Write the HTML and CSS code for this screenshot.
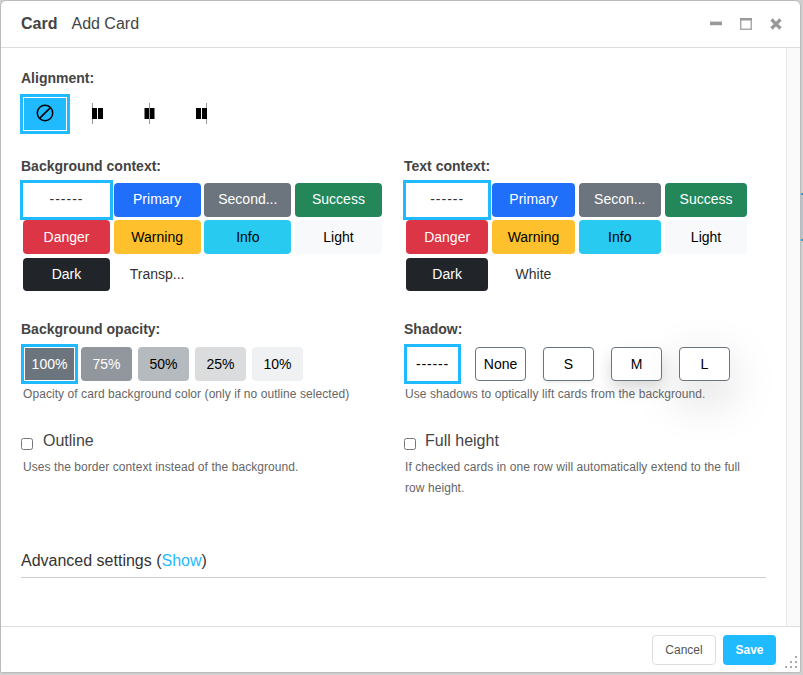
FILE: index.html
```html
<!DOCTYPE html>
<html lang="en">
  <head>
    <meta charset="UTF-8" />
    <meta name="viewport" content="width=device-width, initial-scale=1.0" />
    <title>Card - Add Card</title>
    <link rel="stylesheet" href="styles.css">
  </head>
  <body>
    <div class="page-strip"></div>
    <div class="window">
      <header class="win-head">
        <div class="win-title"><b>Card</b><span>Add Card</span></div>
        <div class="win-controls">
          <svg width="12" height="12" viewBox="0 0 12 12"><rect x="0" y="3.6" width="12" height="3.6" fill="#999"/></svg>
          <svg width="12" height="12" viewBox="0 0 12 12"><rect x="0.75" y="0.75" width="10.5" height="10.5" fill="none" stroke="#aaa" stroke-width="1.5"/><rect x="0" y="0" width="12" height="2.5" fill="#999"/></svg>
          <svg width="12" height="12" viewBox="0 0 12 12"><path d="M1.5 1.5 L10.5 10.5 M10.5 1.5 L1.5 10.5" stroke="#999" stroke-width="3.2"/></svg>
        </div>
      </header>

      <main class="win-body">
        <div class="content">
          <label class="field-label">Alignment:</label>
          <div class="align-row">
            <button class="align-btn selected">
              <svg width="18" height="18" viewBox="0 0 18 18"><circle cx="9" cy="9" r="7.7" fill="none" stroke="#000" stroke-width="1.5"/><path d="M3.6 14.4 L14.4 3.6" stroke="#000" stroke-width="1.5"/></svg>
            </button>
            <button class="align-btn">
              <svg width="11" height="21" viewBox="0 0 11 21"><rect x="0" y="0" width="1" height="21" fill="#999"/><rect x="0" y="5" width="5" height="11"/><rect x="6" y="5" width="5" height="11"/></svg>
            </button>
            <button class="align-btn">
              <svg width="11" height="21" viewBox="0 0 11 21"><rect x="5" y="0" width="1" height="21" fill="#999"/><rect x="0.5" y="5" width="4.5" height="11"/><rect x="6" y="5" width="4.5" height="11"/></svg>
            </button>
            <button class="align-btn">
              <svg width="11" height="21" viewBox="0 0 11 21"><rect x="10" y="0" width="1" height="21" fill="#999"/><rect x="0" y="5" width="5" height="11"/><rect x="6" y="5" width="5" height="11"/></svg>
            </button>
          </div>

          <div class="two-cols row-context">
            <div>
              <label class="field-label">Background context:</label>
              <div class="swatches swatches-bg">
                <button class="swatch selected">------</button>
                <button class="swatch primary">Primary</button>
                <button class="swatch secondary">Second...</button>
                <button class="swatch success">Success</button>
                <button class="swatch danger">Danger</button>
                <button class="swatch warning">Warning</button>
                <button class="swatch info">Info</button>
                <button class="swatch light">Light</button>
                <button class="swatch dark">Dark</button>
                <button class="swatch plain">Transp...</button>
              </div>
            </div>
            <div>
              <label class="field-label">Text context:</label>
              <div class="swatches swatches-text">
                <button class="swatch selected">------</button>
                <button class="swatch primary">Primary</button>
                <button class="swatch secondary">Secon...</button>
                <button class="swatch success">Success</button>
                <button class="swatch danger">Danger</button>
                <button class="swatch warning">Warning</button>
                <button class="swatch info">Info</button>
                <button class="swatch light">Light</button>
                <button class="swatch dark">Dark</button>
                <button class="swatch plain">White</button>
              </div>
            </div>
          </div>

          <div class="two-cols row-opacity">
            <div>
              <label class="field-label">Background opacity:</label>
              <div class="small-row opacity-row">
                <button class="small-btn op-100 selected">100%</button>
                <button class="small-btn op-75">75%</button>
                <button class="small-btn op-50">50%</button>
                <button class="small-btn op-25">25%</button>
                <button class="small-btn op-10">10%</button>
              </div>
              <p class="help">Opacity of card background color (only if no outline selected)</p>
            </div>
            <div>
              <label class="field-label">Shadow:</label>
              <div class="small-row shadow-row">
                <button class="small-btn dashes selected">------</button>
                <button class="small-btn sh sh-none">None</button>
                <button class="small-btn sh sh-s">S</button>
                <button class="small-btn sh sh-m">M</button>
                <button class="small-btn sh sh-l">L</button>
              </div>
              <p class="help help-right">Use shadows to optically lift cards from the background.</p>
            </div>
          </div>

          <div class="two-cols row-checks">
            <div>
              <label class="check"><input type="checkbox" /><span class="check-outline">Outline</span></label>
              <p class="help check-help">Uses the border context instead of the background.</p>
            </div>
            <div>
              <label class="check"><input type="checkbox" /><span class="check-height">Full height</span></label>
              <p class="help help-right check-help">If checked cards in one row will automatically extend to the full row height.</p>
            </div>
          </div>

          <div class="advanced">Advanced settings (<a href="#">Show</a>)</div>
        </div>
        <div class="scroll-track"></div>
      </main>

      <footer class="win-foot">
        <button class="btn-cancel">Cancel</button>
        <button class="btn-save">Save</button>
        <svg class="grip" width="12" height="12" viewBox="0 0 12 12">
          <g fill="#aaa">
            <rect x="10" y="0" width="2" height="2"/>
            <rect x="5" y="5" width="2" height="2"/><rect x="10" y="5" width="2" height="2"/>
            <rect x="0" y="10" width="2" height="2"/><rect x="5" y="10" width="2" height="2"/><rect x="10" y="10" width="2" height="2"/>
          </g>
        </svg>
      </footer>
    </div>
  </body>
</html>
```

FILE: styles.css
```css
* {
  box-sizing: border-box;
}
html,
body {
  height: 100%;
}
body {
  margin: 0;
  padding: 0;
  background-color: #cfcfcf;
  font-family: "Liberation Sans", Arial, sans-serif;
  font-size: 14px;
  color: #444;
  overflow: hidden;
}
button {
  font-family: inherit;
  border: none;
  padding: 0;
  cursor: pointer;
}
.page-strip {
  position: absolute;
  top: 193px;
  right: 0;
  width: 2px;
  height: 48px;
  background-color: #b4c6d2;
  border-top: 2px solid #2a9fd6;
  border-bottom: 2px solid #2a9fd6;
}
.window {
  position: relative;
  width: 801px;
  height: 673px;
  display: flex;
  flex-direction: column;
  background-color: white;
  border: 1px solid #bbb;
  border-radius: 6px 6px 2px 2px;
}
.win-head {
  height: 47px;
  flex: none;
  display: flex;
  align-items: center;
  justify-content: space-between;
  border-bottom: 1px solid #ddd;
  padding: 0 18px 0 20px;
  font-size: 16px;
}
.win-title span {
  margin-left: 14px;
}
.win-controls {
  display: flex;
  gap: 18px;
}
.win-body {
  flex: 1;
  display: flex;
  min-height: 0;
}
.content {
  flex: 1;
  padding: 22px 20px 0 20px;
}
.scroll-track {
  width: 14px;
  background-color: #fafafa;
  border-left: 1px solid #e8e8e8;
}
.field-label {
  display: block;
  font-weight: bold;
  line-height: 17px;
}
.align-row {
  display: flex;
  gap: 8px;
  margin: 10px 0 0 2px;
}
.align-btn {
  width: 44px;
  height: 34px;
  padding-bottom: 2px;
  background: none;
  display: flex;
  align-items: center;
  justify-content: center;
}
.align-btn.selected {
  background-color: #1fbaff;
  outline: 3px solid #1fbaff;
  box-shadow: inset 0 0 0 1px white;
}
.two-cols {
  display: grid;
  grid-template-columns: 383px 1fr;
}
.row-context {
  margin-top: 27px;
}
.swatches {
  display: grid;
  gap: 3.67px;
  margin: 8px 0 0 2px;
  grid-auto-rows: 33.67px;
}
.swatches-bg {
  grid-template-columns: repeat(4, 87px);
}
.swatches-text {
  grid-template-columns: repeat(4, 82.3px);
  column-gap: 4px;
}
.swatch {
  border-radius: 4px;
  font-size: 14px;
  color: white;
  background: none;
  padding-bottom: 1px;
}
.swatch.selected {
  border-radius: 0;
  background-color: white;
  color: #333;
  letter-spacing: 1px;
  outline: 3px solid #1fbaff;
}
.primary { background-color: #1f6ffb; }
.secondary { background-color: #6c757d; }
.success { background-color: #23875a; }
.danger { background-color: #dc3545; }
.warning { background-color: #ffc02d; color: black; }
.info { background-color: #29caf0; color: black; }
.light { background-color: #f8f9fa; color: black; }
.dark { background-color: #212529; }
.swatch.plain { color: #333; }
.row-opacity {
  margin-top: 30px;
}
.small-row {
  display: flex;
  margin: 9px 0 0 3px;
}
.opacity-row {
  gap: 6px;
}
.shadow-row {
  gap: 17px;
}
.small-btn {
  width: 51px;
  height: 34px;
  border-radius: 4px;
  font-size: 14px;
  color: black;
  background-color: white;
}
.small-btn.selected {
  border-radius: 0;
  outline: 3px solid #1fbaff;
  box-shadow: inset 0 0 0 1px white;
}
.small-btn.dashes {
  letter-spacing: 0.8px;
}
.op-100 { background-color: #6c757d; color: white; }
.op-75 { background-color: #91979d; color: white; }
.op-50 { background-color: #b5babe; }
.op-25 { background-color: #dadcde; }
.op-10 { background-color: #f0f1f2; }
.sh {
  border: 1px solid #6c757d;
}
.sh-s { box-shadow: 0 2px 4px rgba(0, 0, 0, 0.075); }
.sh-m { box-shadow: 0 8px 16px rgba(0, 0, 0, 0.15); }
.sh-l { box-shadow: 0 16px 48px rgba(0, 0, 0, 0.175); }
.help {
  margin: 3px 0 0 2px;
  font-size: 12px;
  line-height: 21px;
  color: #666;
  letter-spacing: 0.065px;
  max-width: 345px;
}
.help-right {
  margin-left: 1px;
  max-width: 350px;
}
.row-checks {
  margin-top: 26px;
}
.check {
  display: flex;
  align-items: center;
  font-size: 16px;
  line-height: 20px;
}
.check input {
  margin: 5px 0 0 0;
  width: 12px;
  height: 12px;
}
.check-outline {
  margin-left: 10px;
}
.check-height {
  margin-left: 9px;
}
.check-help {
  margin-top: 6px;
}
.advanced {
  margin-top: 52px;
  padding-bottom: 6px;
  font-size: 16px;
  line-height: 20px;
  color: #333;
  border-bottom: 1px solid #ccc;
}
.advanced a {
  color: #1fbaff;
  text-decoration: none;
}
.win-foot {
  height: 46px;
  flex: none;
  display: flex;
  align-items: flex-start;
  justify-content: flex-end;
  gap: 7px;
  padding: 8px 24px 0 0;
  border-top: 1px solid #ddd;
  position: relative;
}
.win-foot button {
  width: 53px;
  height: 30px;
  border-radius: 4px;
  font-size: 12px;
}
.win-foot .btn-cancel {
  width: 64px;
  background-color: white;
  border: 1px solid #ddd;
  color: #555;
}
.btn-save {
  background-color: #1fbaff;
  color: white;
  font-weight: bold;
}
.grip {
  position: absolute;
  right: 3px;
  bottom: 4px;
}
```
